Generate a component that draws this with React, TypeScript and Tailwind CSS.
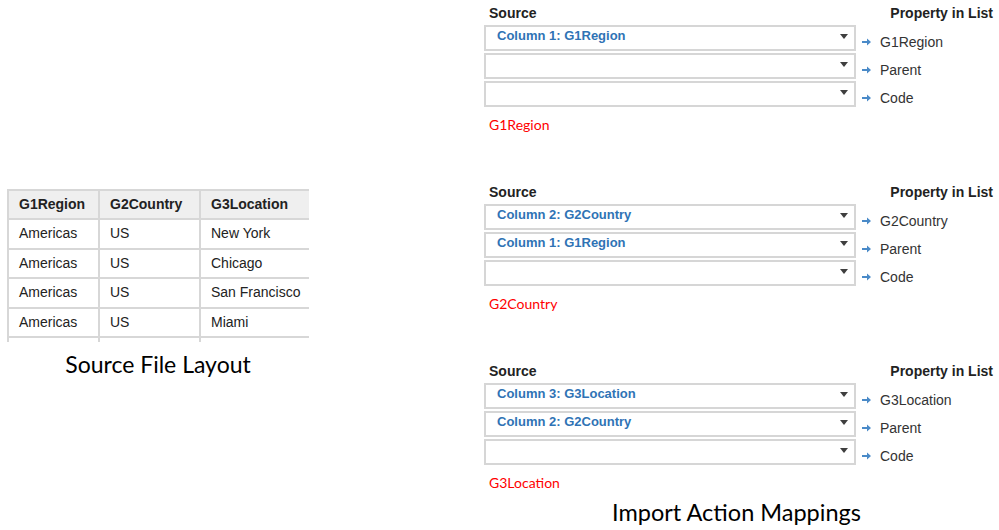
import React from 'react';

const rows = [
  ['Americas', 'US', 'New York'],
  ['Americas', 'US', 'Chicago'],
  ['Americas', 'US', 'San Francisco'],
  ['Americas', 'US', 'Miami'],
  ['', '', ''],
];

interface Mapping {
  source: string;
  property: string;
}

interface Section {
  rows: Mapping[];
  label: string;
}

const sections: Section[] = [
  {
    label: 'G1Region',
    rows: [
      { source: 'Column 1: G1Region', property: 'G1Region' },
      { source: '', property: 'Parent' },
      { source: '', property: 'Code' },
    ],
  },
  {
    label: 'G2Country',
    rows: [
      { source: 'Column 2: G2Country', property: 'G2Country' },
      { source: 'Column 1: G1Region', property: 'Parent' },
      { source: '', property: 'Code' },
    ],
  },
  {
    label: 'G3Location',
    rows: [
      { source: 'Column 3: G3Location', property: 'G3Location' },
      { source: 'Column 2: G2Country', property: 'Parent' },
      { source: '', property: 'Code' },
    ],
  },
];

function Caret() {
  return (
    <svg width="8" height="5" viewBox="0 0 8 5" className="mt-[7px]">
      <path d="M0 0 L8 0 L4 5 Z" fill="#3f3f3f" />
    </svg>
  );
}

function Arrow() {
  return (
    <svg width="9" height="8" viewBox="0 0 9 8">
      <path d="M0 3 H5 V0.5 L9 4 L5 7.5 V5 H0 Z" fill="#4a8ac8" />
    </svg>
  );
}

function MappingSection({ section }: { section: Section }) {
  return (
    <div className="h-[179px]">
      <div className="flex justify-between items-end h-[22px] pr-[6px] font-bold text-[14px] text-[#222] font-['Liberation_Sans',Arial,sans-serif]">
        <span className="ml-[5px]">Source</span>
        <span>Property in List</span>
      </div>
      <div className="flex flex-col gap-[2px] mt-[1px]">
        {section.rows.map((r, i) => (
          <div key={i} className="flex items-start">
            <div className="w-[372px] h-[26px] border-2 border-[#d6d6d6] bg-white flex justify-between pl-[11px] pr-[6px]">
              <span className="text-[13px] font-bold text-[#2f73b5] leading-[15px] pt-[1px] font-['Liberation_Sans',Arial,sans-serif]">
                {r.source}
              </span>
              <Caret />
            </div>
            <div className="flex items-center gap-[9px] ml-[6px] pt-[9px]">
              <Arrow />
              <span className="text-[14px] leading-[16px] text-[#333] font-['Liberation_Sans',Arial,sans-serif]">
                {r.property}
              </span>
            </div>
          </div>
        ))}
      </div>
      <div className="ml-[5px] mt-[7px] text-[14px] text-[#ff0000] font-['Lato',sans-serif]">
        {section.label}
      </div>
    </div>
  );
}

export default function App() {
  return (
    <div className="w-[999px] h-[530px] bg-white flex overflow-hidden">
      {/* Source file */}
      <div className="w-[484px] shrink-0 pl-[7px] pt-[189px]">
        <div className="w-[302px] h-[153px] overflow-hidden">
          <table className="border-collapse table-fixed w-[302px] text-[14px] text-[#222] font-['Liberation_Sans',Arial,sans-serif]">
            <colgroup>
              <col className="w-[91px]" />
              <col className="w-[101px]" />
              <col className="w-[110px]" />
            </colgroup>
            <thead>
              <tr className="h-[29px] bg-[#efefef]">
                {['G1Region', 'G2Country', 'G3Location'].map((h) => (
                  <th key={h} className="border-2 border-[#d7d7d7] text-left font-bold pl-[10px]">
                    {h}
                  </th>
                ))}
              </tr>
            </thead>
            <tbody>
              {rows.map((r, i) => (
                <tr key={i} className="h-[29.5px]">
                  {r.map((c, j) => (
                    <td key={j} className="border-2 border-[#d7d7d7] pl-[10px]">
                      {c}
                    </td>
                  ))}
                </tr>
              ))}
            </tbody>
          </table>
        </div>
        <div className="w-[302px] text-center text-[23px] text-black mt-[5px] font-['Lato',sans-serif]">
          Source File Layout
        </div>
      </div>

      {/* Import action mappings */}
      <div className="w-[515px] shrink-0 pt-[2px]">
        {sections.map((s, i) => (
          <MappingSection key={i} section={s} />
        ))}
        <div className="-mt-[44px] pr-[10px] text-center text-[23.5px] text-black font-['Lato',sans-serif]">
          Import Action Mappings
        </div>
      </div>
    </div>
  );
}
